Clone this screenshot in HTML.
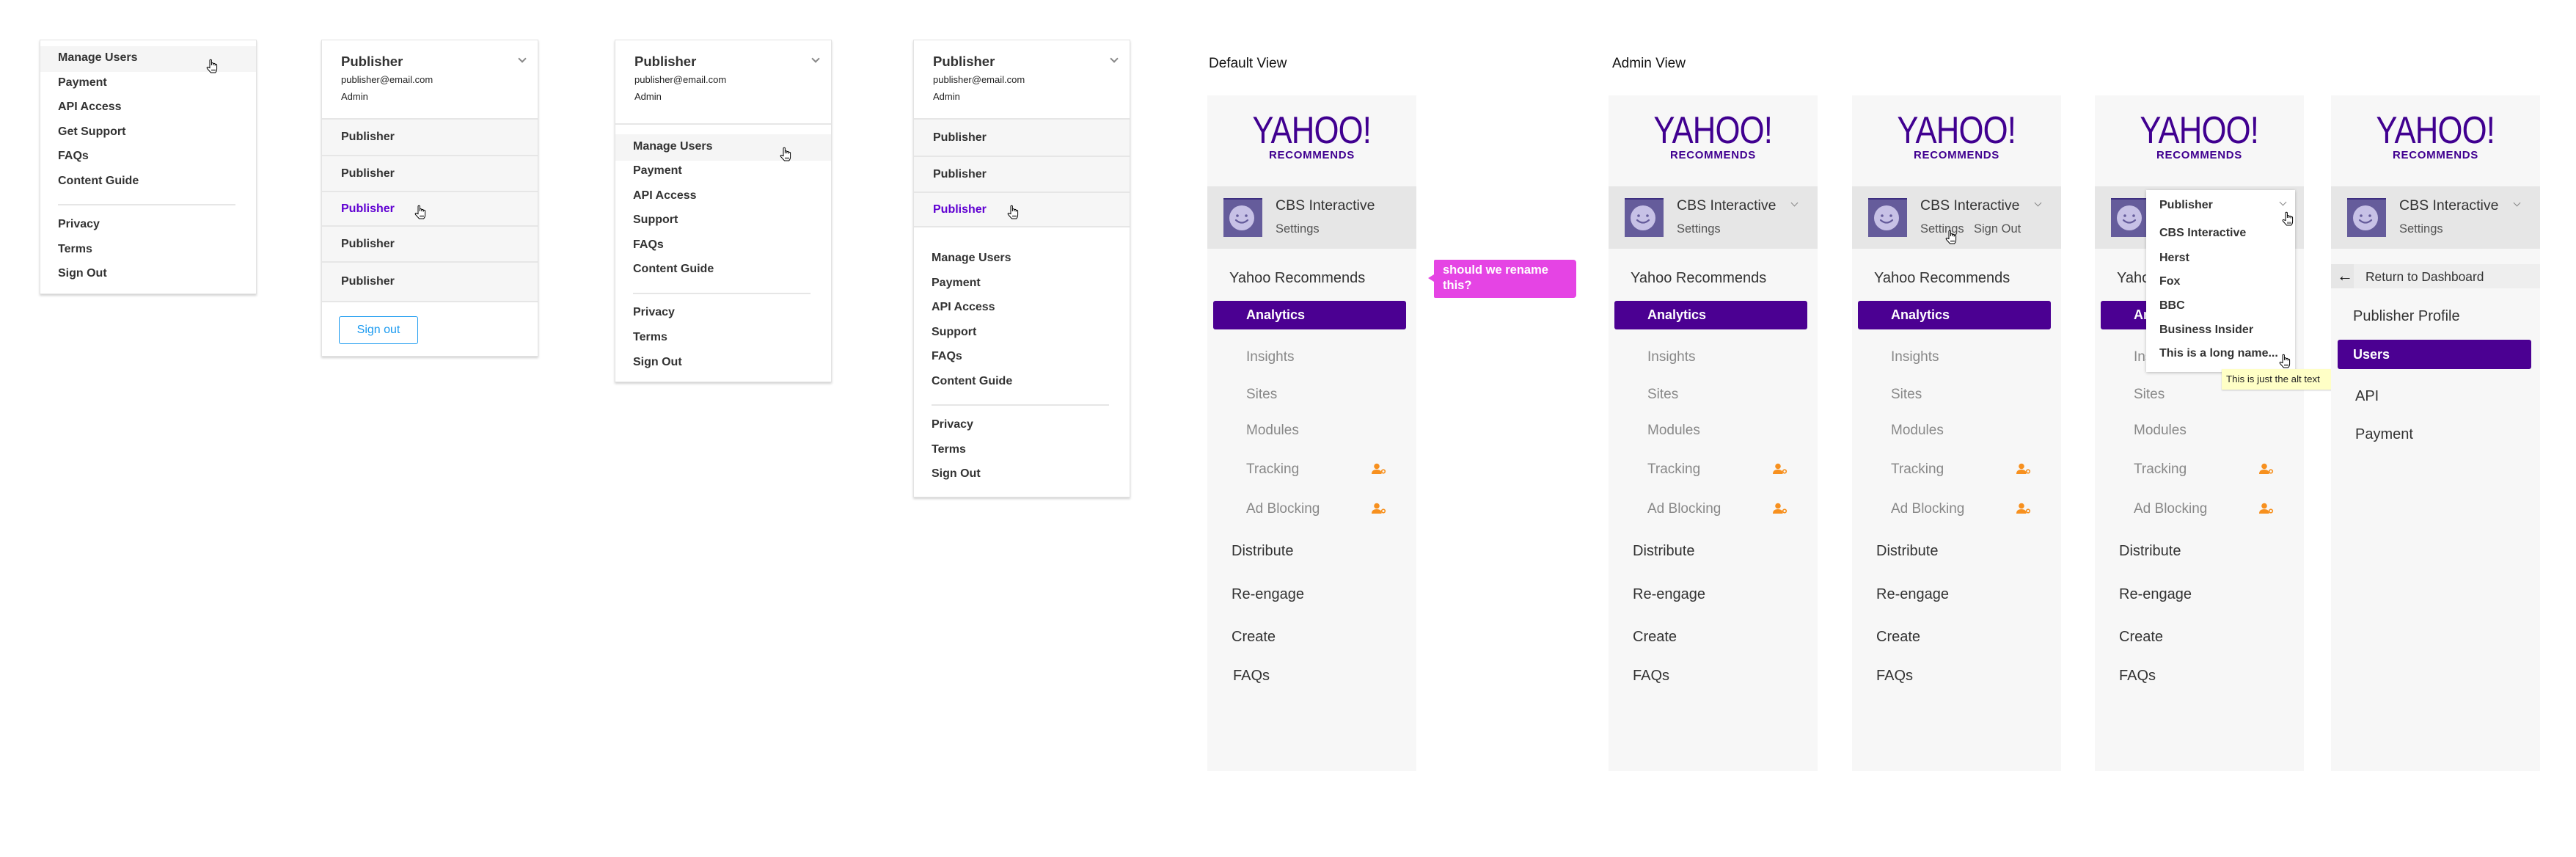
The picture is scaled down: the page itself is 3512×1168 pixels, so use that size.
<!DOCTYPE html>
<html><head><meta charset="utf-8"><style>
*{margin:0;padding:0;box-sizing:border-box}
body{width:3512px;height:1168px;background:#fff;position:relative;overflow:hidden;font-family:"Liberation Sans",Arial,sans-serif;color:#333}
.a{position:absolute;white-space:nowrap}
.card{position:absolute;background:#fff;border:1px solid #e3e3e3;box-shadow:0 2px 3px rgba(0,0,0,.18)}
.mi{position:absolute;left:24px;font-size:16px;font-weight:bold;color:#333;line-height:20px;white-space:nowrap}
.hd{position:absolute;left:26px;font-size:18.5px;font-weight:bold;color:#333;line-height:22px}
.em{position:absolute;left:26px;font-size:13px;color:#222;line-height:16px}
.chev{position:absolute;width:8px;height:8px;border-right:2px solid #888;border-bottom:2px solid #888;transform:rotate(45deg)}
.row{position:absolute;left:0;right:0;background:#f6f6f6;border-bottom:2px solid #e6e6e6}
.row span{position:absolute;left:26px;font-size:16px;font-weight:bold;color:#333;line-height:20px;top:50%;margin-top:-10px}
.div{position:absolute;height:2px;background:#e6e6e6}
.sb{position:absolute;top:130px;width:285px;height:921px;background:#f7f7f7}
.logo{position:absolute;left:0;width:285px;text-align:center;color:#400090}
.y1{top:20px;font-size:52px;line-height:56px;letter-spacing:-1px}
.y1 span{display:inline-block;transform:scaleX(.84)}
.y2{top:74px;font-size:15px;font-weight:bold;letter-spacing:.7px;line-height:16px}
.band{position:absolute;left:0;right:0;top:124px;height:85px;background:#e6e6e6}
.av{position:absolute;left:22px;top:16px;width:53px;height:53px}
.cbs{position:absolute;left:93px;top:14px;font-size:19.5px;color:#333;line-height:24px;white-space:nowrap}
.set{position:absolute;left:93px;top:48px;font-size:16.5px;color:#555;line-height:20px;white-space:nowrap}
.t{position:absolute;line-height:24px;white-space:nowrap;font-size:20px;color:#333}
.sub{left:53px;color:#888;font-size:19px}
.bar{position:absolute;left:8px;width:263px;top:150px;height:39px;background:#4b0092;border-radius:3px}
.ic{position:absolute;left:224px}
.lbl{position:absolute;top:76px;font-size:19px;color:#111;line-height:22px}
</style></head><body>

<svg width="0" height="0" style="position:absolute">
<defs>
<symbol id="hand" viewBox="0 0 16 20"><path d="M5 11V2.5a1.2 1.2 0 0 1 2.4 0V9V6.8a1.2 1.2 0 0 1 2.4 0V9V7.6a1.2 1.2 0 0 1 2.4 0V9.5V8.6a1.2 1.2 0 0 1 2.4 0V14q0 3-2 5H6.5L1.5 13.5q-1-1.6.6-2.1L5 12.5Z" fill="#fff" stroke="#000" stroke-width="1"/><path d="M8 14.5v2.5M10 14.5v2.5M12 14.5v2.5" stroke="#000" stroke-width=".9"/></symbol>
<symbol id="usr" viewBox="0 0 20 16"><circle cx="7" cy="4.5" r="3.8" fill="#f7901e"/><path d="M0 15q0-6 7-6q5 0 6.5 3.5V15Z" fill="#f7901e"/><circle cx="16" cy="11.5" r="2.3" fill="none" stroke="#f7901e" stroke-width="1.6"/></symbol>
<symbol id="face" viewBox="0 0 53 53"><rect width="53" height="53" fill="#655c9b"/><rect width="53" height="2" fill="#3d2f80"/><circle cx="25" cy="27" r="17" fill="#c7c1e6"/><circle cx="19" cy="24" r="1.8" fill="#655c9b"/><circle cx="31" cy="24" r="1.8" fill="#655c9b"/><path d="M17 30q8 7 16 0" fill="none" stroke="#655c9b" stroke-width="2.2" stroke-linecap="round"/></symbol>
</defs></svg>

<!-- Card 1 -->
<div class="card" style="left:54px;top:54px;width:296px;height:347px">
 <div style="position:absolute;left:0;right:0;top:8px;height:35px;background:#f5f5f5"></div>
 <div class="mi" style="top:14px">Manage Users</div>
 <div class="mi" style="top:48px">Payment</div>
 <div class="mi" style="top:81px">API Access</div>
 <div class="mi" style="top:115px">Get Support</div>
 <div class="mi" style="top:148px">FAQs</div>
 <div class="mi" style="top:182px">Content Guide</div>
 <div class="div" style="left:24px;width:242px;top:223px"></div>
 <div class="mi" style="top:241px">Privacy</div>
 <div class="mi" style="top:275px">Terms</div>
 <div class="mi" style="top:308px">Sign Out</div>
</div>
<svg class="a" style="left:281px;top:80px" width="16" height="20"><use href="#hand"/></svg>

<!-- Card 2 -->
<div class="card" style="left:438px;top:54px;width:296px;height:432px">
 <div class="hd" style="top:18px">Publisher</div>
 <div class="chev" style="left:269px;top:21px"></div>
 <div class="em" style="top:46px">publisher@email.com</div>
 <div class="em" style="top:69px">Admin</div>
 <div class="row" style="top:106px;height:52px;border-top:2px solid #e6e6e6"><span>Publisher</span></div>
 <div class="row" style="top:158px;height:49px"><span>Publisher</span></div>
 <div class="row" style="top:207px;height:47px"><span style="color:#6001d2">Publisher</span></div>
 <div class="row" style="top:254px;height:49px"><span>Publisher</span></div>
 <div class="row" style="top:303px;height:54px"><span>Publisher</span></div>
 <div style="position:absolute;left:23px;top:376px;width:108px;height:38px;border:1.5px solid #1a9af0;border-radius:3px;color:#1a9af0;font-size:16px;text-align:center;line-height:35px">Sign out</div>
</div>
<svg class="a" style="left:565px;top:279px" width="16" height="20"><use href="#hand"/></svg>

<!-- Card 3 -->
<div class="card" style="left:838px;top:54px;width:296px;height:467px">
 <div class="hd" style="top:18px">Publisher</div>
 <div class="chev" style="left:269px;top:21px"></div>
 <div class="em" style="top:46px">publisher@email.com</div>
 <div class="em" style="top:69px">Admin</div>
 <div class="div" style="left:0;right:0;top:113px"></div>
 <div style="position:absolute;left:0;right:0;top:128px;height:36px;background:#f5f5f5"></div>
 <div class="mi" style="top:135px">Manage Users</div>
 <div class="mi" style="top:168px">Payment</div>
 <div class="mi" style="top:202px">API Access</div>
 <div class="mi" style="top:235px">Support</div>
 <div class="mi" style="top:269px">FAQs</div>
 <div class="mi" style="top:302px">Content Guide</div>
 <div class="div" style="left:24px;width:242px;top:344px"></div>
 <div class="mi" style="top:361px">Privacy</div>
 <div class="mi" style="top:395px">Terms</div>
 <div class="mi" style="top:429px">Sign Out</div>
</div>
<svg class="a" style="left:1063px;top:200px" width="16" height="20"><use href="#hand"/></svg>

<!-- Card 4 -->
<div class="card" style="left:1245px;top:54px;width:296px;height:624px">
 <div class="hd" style="top:18px">Publisher</div>
 <div class="chev" style="left:269px;top:21px"></div>
 <div class="em" style="top:46px">publisher@email.com</div>
 <div class="em" style="top:69px">Admin</div>
 <div class="row" style="top:106px;height:53px;border-top:2px solid #e6e6e6"><span>Publisher</span></div>
 <div class="row" style="top:159px;height:49px"><span>Publisher</span></div>
 <div class="row" style="top:208px;height:47px"><span style="color:#6001d2">Publisher</span></div>
 <div class="mi" style="top:287px">Manage Users</div>
 <div class="mi" style="top:321px">Payment</div>
 <div class="mi" style="top:354px">API Access</div>
 <div class="mi" style="top:388px">Support</div>
 <div class="mi" style="top:421px">FAQs</div>
 <div class="mi" style="top:455px">Content Guide</div>
 <div class="div" style="left:24px;width:242px;top:496px"></div>
 <div class="mi" style="top:514px">Privacy</div>
 <div class="mi" style="top:548px">Terms</div>
 <div class="mi" style="top:581px">Sign Out</div>
</div>
<svg class="a" style="left:1373px;top:279px" width="16" height="20"><use href="#hand"/></svg>

<div class="lbl" style="left:1648px">Default View</div>
<div class="lbl" style="left:2198px">Admin View</div>

<!-- Sidebar 1 -->
<div class="sb" style="left:1646px">
 <div class="logo y1"><span>YAHOO!</span></div><div class="logo y2">RECOMMENDS</div>
 <div class="band"><svg class="av" viewBox="0 0 53 53"><use href="#face"/></svg><div class="cbs">CBS Interactive</div><div class="set">Settings</div></div>
 <div class="t" style="left:30px;top:237px">Yahoo Recommends</div>
 <div class="bar" style="top:280px"></div>
 <div class="t" style="left:53px;top:287px;color:#fff;font-weight:bold;font-size:18px">Analytics</div>
 <div class="t sub" style="top:345px">Insights</div>
 <div class="t sub" style="top:396px">Sites</div>
 <div class="t sub" style="top:445px">Modules</div>
 <div class="t sub" style="top:498px">Tracking</div>
 <div class="t sub" style="top:552px">Ad Blocking</div>
 <svg class="ic" style="top:501px" width="20" height="16"><use href="#usr"/></svg>
 <svg class="ic" style="top:555px" width="20" height="16"><use href="#usr"/></svg>
 <div class="t" style="left:33px;top:609px">Distribute</div>
 <div class="t" style="left:33px;top:668px">Re-engage</div>
 <div class="t" style="left:33px;top:726px">Create</div>
 <div class="t" style="left:35px;top:779px">FAQs</div>
</div>
<svg class="a" style="left:1946px;top:354px" width="204" height="53"><path d="M11 0H199a4 4 0 0 1 4 4V48a4 4 0 0 1-4 4H11a2 2 0 0 1-2-2V30L1 25L9 20V2a2 2 0 0 1 2-2Z" fill="#e544e4"/></svg>
<div class="a" style="left:1967px;top:358px;font-size:16.5px;font-weight:bold;color:#fff;line-height:21px">should we rename<br>this?</div>

<!-- Sidebar 2 -->
<div class="sb" style="left:2193px">
 <div class="logo y1"><span>YAHOO!</span></div><div class="logo y2">RECOMMENDS</div>
 <div class="band"><svg class="av" viewBox="0 0 53 53"><use href="#face"/></svg><div class="cbs">CBS Interactive</div><div class="set">Settings</div><div class="chev" style="left:250px;top:19px;width:7px;height:7px;border-width:1.5px"></div></div>
 <div class="t" style="left:30px;top:237px">Yahoo Recommends</div>
 <div class="bar" style="top:280px"></div>
 <div class="t" style="left:53px;top:287px;color:#fff;font-weight:bold;font-size:18px">Analytics</div>
 <div class="t sub" style="top:345px">Insights</div>
 <div class="t sub" style="top:396px">Sites</div>
 <div class="t sub" style="top:445px">Modules</div>
 <div class="t sub" style="top:498px">Tracking</div>
 <div class="t sub" style="top:552px">Ad Blocking</div>
 <svg class="ic" style="top:501px" width="20" height="16"><use href="#usr"/></svg>
 <svg class="ic" style="top:555px" width="20" height="16"><use href="#usr"/></svg>
 <div class="t" style="left:33px;top:609px">Distribute</div>
 <div class="t" style="left:33px;top:668px">Re-engage</div>
 <div class="t" style="left:33px;top:726px">Create</div>
 <div class="t" style="left:33px;top:779px">FAQs</div>
</div>

<!-- Sidebar 3 -->
<div class="sb" style="left:2525px">
 <div class="logo y1"><span>YAHOO!</span></div><div class="logo y2">RECOMMENDS</div>
 <div class="band"><svg class="av" viewBox="0 0 53 53"><use href="#face"/></svg><div class="cbs">CBS Interactive</div><div class="set">Settings</div><div class="set" style="left:166px">Sign Out</div><div class="chev" style="left:250px;top:19px;width:7px;height:7px;border-width:1.5px"></div></div>
 <div class="t" style="left:30px;top:237px">Yahoo Recommends</div>
 <div class="bar" style="top:280px"></div>
 <div class="t" style="left:53px;top:287px;color:#fff;font-weight:bold;font-size:18px">Analytics</div>
 <div class="t sub" style="top:345px">Insights</div>
 <div class="t sub" style="top:396px">Sites</div>
 <div class="t sub" style="top:445px">Modules</div>
 <div class="t sub" style="top:498px">Tracking</div>
 <div class="t sub" style="top:552px">Ad Blocking</div>
 <svg class="ic" style="top:501px" width="20" height="16"><use href="#usr"/></svg>
 <svg class="ic" style="top:555px" width="20" height="16"><use href="#usr"/></svg>
 <div class="t" style="left:33px;top:609px">Distribute</div>
 <div class="t" style="left:33px;top:668px">Re-engage</div>
 <div class="t" style="left:33px;top:726px">Create</div>
 <div class="t" style="left:33px;top:779px">FAQs</div>
</div>
<svg class="a" style="left:2652px;top:313px" width="16" height="20"><use href="#hand"/></svg>

<!-- Sidebar 4 -->
<div class="sb" style="left:2856px">
 <div class="logo y1"><span>YAHOO!</span></div><div class="logo y2">RECOMMENDS</div>
 <div class="band"><svg class="av" viewBox="0 0 53 53"><use href="#face"/></svg></div>
 <div class="t" style="left:30px;top:237px">Yahoo Recommends</div>
 <div class="bar" style="top:280px"></div>
 <div class="t" style="left:53px;top:287px;color:#fff;font-weight:bold;font-size:18px">Analytics</div>
 <div class="t sub" style="top:345px">Insights</div>
 <div class="t sub" style="top:396px">Sites</div>
 <div class="t sub" style="top:445px">Modules</div>
 <div class="t sub" style="top:498px">Tracking</div>
 <div class="t sub" style="top:552px">Ad Blocking</div>
 <svg class="ic" style="top:501px" width="20" height="16"><use href="#usr"/></svg>
 <svg class="ic" style="top:555px" width="20" height="16"><use href="#usr"/></svg>
 <div class="t" style="left:33px;top:609px">Distribute</div>
 <div class="t" style="left:33px;top:668px">Re-engage</div>
 <div class="t" style="left:33px;top:726px">Create</div>
 <div class="t" style="left:33px;top:779px">FAQs</div>
 <div style="position:absolute;left:70px;top:129px;width:203px;height:248px;background:#fff;box-shadow:0 1px 4px rgba(0,0,0,.25)">
  <div class="mi" style="left:18px;top:11px">Publisher</div>
  <div class="chev" style="left:183px;top:13px;width:7px;height:7px;border-width:1.5px"></div>
  <div class="mi" style="left:18px;top:49px">CBS Interactive</div>
  <div class="mi" style="left:18px;top:83px">Herst</div>
  <div class="mi" style="left:18px;top:115px">Fox</div>
  <div class="mi" style="left:18px;top:148px">BBC</div>
  <div class="mi" style="left:18px;top:181px">Business Insider</div>
  <div class="mi" style="left:18px;top:213px">This is a long name...</div>
 </div>
</div>
<div class="a" style="left:3029px;top:503px;width:153px;height:28px;background:#ffffc6;box-shadow:0 1px 2px rgba(0,0,0,.2);font-size:13.3px;color:#222;line-height:28px;padding-left:6px">This is just the alt text</div>
<svg class="a" style="left:3111px;top:288px" width="16" height="20"><use href="#hand"/></svg>
<svg class="a" style="left:3107px;top:482px" width="16" height="20"><use href="#hand"/></svg>

<!-- Sidebar 5 -->
<div class="sb" style="left:3178px">
 <div class="logo y1"><span>YAHOO!</span></div><div class="logo y2">RECOMMENDS</div>
 <div class="band"><svg class="av" viewBox="0 0 53 53"><use href="#face"/></svg><div class="cbs">CBS Interactive</div><div class="set">Settings</div><div class="chev" style="left:250px;top:19px;width:7px;height:7px;border-width:1.5px"></div></div>
 <div style="position:absolute;left:0;right:0;top:230px;height:33px;background:#eee"></div>
 <div style="position:absolute;left:0;width:31px;top:230px;height:33px;background:#e6e6e6"></div>
 <div class="t" style="left:8px;top:234px;font-size:22px;color:#111">&#8592;</div>
 <div class="t" style="left:47px;top:235px;font-size:17.4px">Return to Dashboard</div>
 <div class="t" style="left:30px;top:289px">Publisher Profile</div>
 <div class="bar" style="left:9px;width:264px;top:333px;height:40px"></div>
 <div class="t" style="left:30px;top:341px;color:#fff;font-weight:bold;font-size:18px">Users</div>
 <div class="t" style="left:33px;top:398px">API</div>
 <div class="t" style="left:33px;top:450px">Payment</div>
</div>

</body></html>
